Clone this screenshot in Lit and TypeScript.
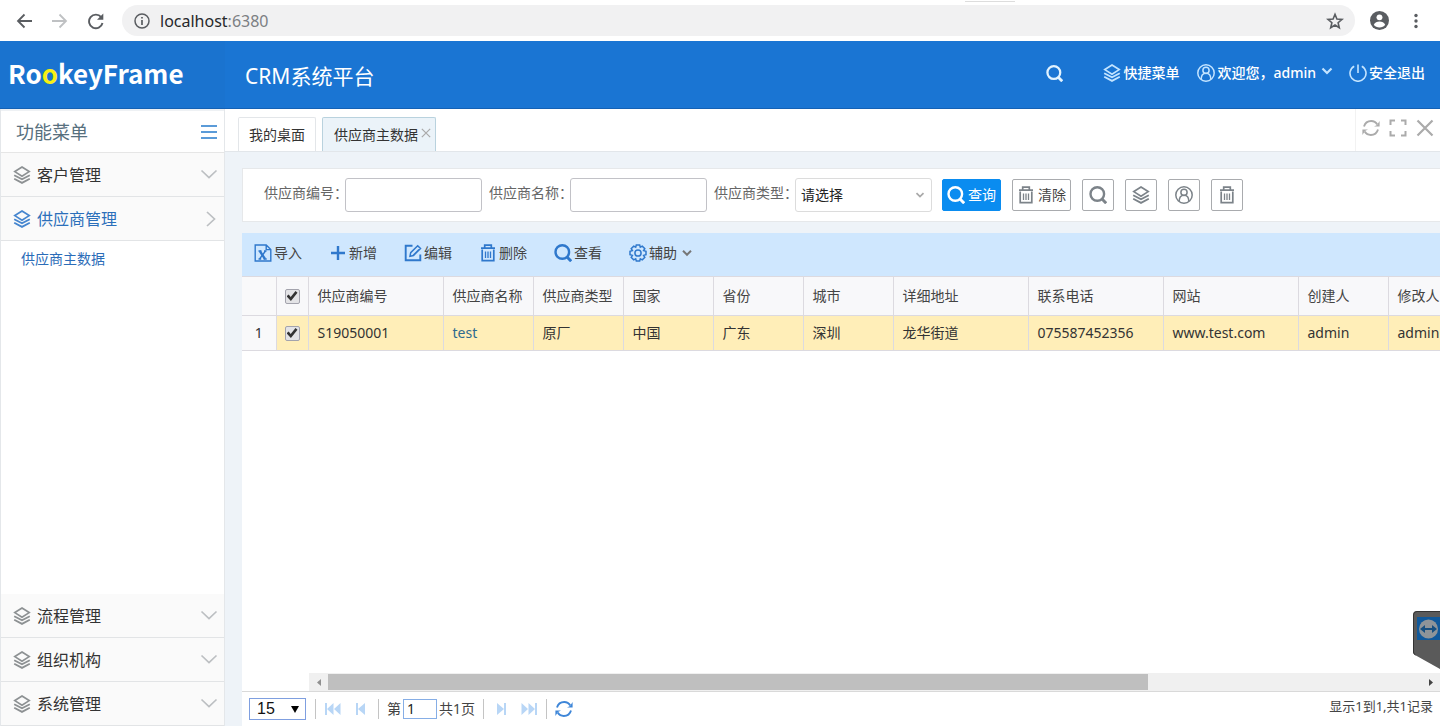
import { LitElement, html, css, svg } from "lit";
import { customElement, property } from "lit/decorators.js";

const shapes: Record<string, unknown> = {
  back: svg`<path d="M17 9H3M9.500 2.500L3 9l6.500 6.500" stroke-width="1.800"/>`,
  forward: svg`<path d="M1 9h14M8.500 2.500L15 9l-6.500 6.500" stroke-width="1.800"/>`,
  reload: svg`<path d="M14.200 5.200A6.800 6.800 0 1 0 15.500 11" stroke-width="1.900"/><path d="M16.300 1.500v6.300H10z" fill="currentColor" stroke="none"/>`,
  info: svg`<circle cx="9" cy="9" r="7" stroke-width="1.500"/><path d="M9 8v5M9 5v1.600" stroke-width="1.700"/>`,
  star: svg`<path d="M9 2.300l1.900 4.700 5.100.4-3.900 3.300 1.200 5L9 13l-4.300 2.700 1.200-5L2 7.400l5.100-.4z" stroke-width="1.600"/>`,
  profile: svg`<circle cx="9" cy="9" r="9" fill="currentColor" stroke="none"/><circle cx="9" cy="6" r="2.800" fill="#fff" stroke="none"/><path d="M3.600 13c1-2.200 3-3 5.400-3s4.400.8 5.400 3c-1.200 1.600-3.200 2.600-5.400 2.600S4.800 14.600 3.600 13z" fill="#fff" stroke="none"/>`,
  dots: svg`<g fill="currentColor" stroke="none"><circle cx="9" cy="3.500" r="1.700"/><circle cx="9" cy="9" r="1.700"/><circle cx="9" cy="14.500" r="1.700"/></g>`,
  layers: svg`<path d="M9 1l7.200 4.600L9 10.200 1.800 5.600z" stroke-width="1.700"/><path d="M1.200 9.200L9 13.300l7.800-4.100M1.200 12.700L9 16.900l7.800-4.200" stroke-width="1.800"/>`,
  search: svg`<circle cx="8.300" cy="8" r="6.800" stroke-width="2.400"/><path d="M13 13l4.200 4.200" stroke-width="3"/>`,
  user: svg`<circle cx="9" cy="9" r="8.200" stroke-width="1.500"/><circle cx="9" cy="6.300" r="3.100" stroke-width="1.500"/><path d="M4.200 15.300c0-3.800 1.700-6 4.800-6s4.800 2.200 4.800 6" stroke-width="1.500"/>`,
  power: svg`<path d="M5.200 2.200a8 8 0 1 0 7.600 0M9 .5v8.500" stroke-width="1.600"/>`,
  down: svg`<path d="M4.500 6.500L9 11l4.500-4.500" stroke-width="2.200"/>`,
  wideDown: svg`<path d="M1.500 4.500L9 11.500l7.500-7" stroke-width="1.700"/>`,
  wideRight: svg`<path d="M7 2l7.500 7L7 16" stroke-width="1.700"/>`,
  menu: svg`<path d="M1 3h16M1 9h16M1 15h16" stroke-width="2"/>`,
  refresh: svg`<path d="M2 7.500C3 4 6 2 9.200 2c2.800 0 4.800 1.300 6.100 3.400M16 10.500C15 14 12 16 8.800 16c-2.800 0-4.800-1.300-6.100-3.400" stroke-width="1.900"/><path d="M17.600 2v5.600H12l3-1.500zM.4 16v-5.600H6l-3 1.500z" fill="currentColor" stroke="none"/>`,
  expand: svg`<path d="M1.500 6V1.500H6M12 1.500h4.500V6M16.500 12v4.500H12M6 16.500H1.500V12" stroke-width="2"/>`,
  close: svg`<path d="M1.500 1.500l15 15M16.500 1.500l-15 15" stroke-width="2.200"/>`,
  excel: svg`<path d="M1.200 1h11l4.600 4.600V17H1.200zM12.200 1v4.600h4.600" stroke-width="1.400"/><path d="M5.800 7l5.200 8" stroke-width="2.300"/><path d="M5.500 15L11.500 7M4.500 7h3M10 7h2.500M4.500 15h2.700M9.700 15h3" stroke-width="1.400"/>`,
  plus: svg`<path d="M2 9h14M9 2v14" stroke-width="2.400"/>`,
  edit: svg`<path d="M8.500 1.700H1.700v14.600h14.600V10.500" stroke-width="1.900"/><path d="M6 12.200l.7-3.500 7-7 2.800 2.800-7 7zM9 11.500l6-6" stroke-width="1.500"/>`,
  trash: svg`<path d="M2 4.200h14M5.700 3.800V1.200h6.600v2.600M3.200 5.500v11.200h11.600V5.500" stroke-width="1.700"/><path d="M6.500 7.500v6.500M9 7.500v6.500M11.500 7.500v6.500" stroke-width="1.300"/>`,
  gear: svg`<path d="M7.300 1h3.400l.6 2.200 2-1.100 2.500 2.500-1.200 2 2.400.7v3.400l-2.400.7 1.200 2-2.500 2.500-2-1.100-.6 2.200H7.300l-.6-2.200-2 1.100-2.500-2.500 1.200-2L1 10.700V7.300l2.400-.7-1.200-2 2.500-2.500 2 1.100z" stroke-width="1.500"/><circle cx="9" cy="9" r="3.100" stroke-width="1.500"/>`,
  first: svg`<path d="M2 3v12" stroke-width="2"/><path d="M9.500 3v12L3 9zM16.500 3v12l-6.500-6z" fill="currentColor" stroke="none"/>`,
  prev: svg`<path d="M5 3v12" stroke-width="2"/><path d="M13 3v12L6 9z" fill="currentColor" stroke="none"/>`,
  next: svg`<path d="M13 3v12" stroke-width="2"/><path d="M5 3v12l7-6z" fill="currentColor" stroke="none"/>`,
  last: svg`<path d="M16 3v12" stroke-width="2"/><path d="M8.500 3v12L15 9zM1.500 3v12L8 9z" fill="currentColor" stroke="none"/>`,
};

@customElement("ui-icon")
class UiIcon extends LitElement {
  @property() name = "";
  static styles = css`
    :host { display: inline-flex; width: 18px; height: 18px; flex: none; }
    svg { width: 100%; height: 100%; fill: none; stroke: currentColor; stroke-width: 1.4; }
  `;
  render() {
    return html`<svg viewBox="0 0 18 18" aria-hidden="true">${shapes[this.name]}</svg>`;
  }
}

const columns = [
  { title: "供应商编号", value: "S19050001", wide: true },
  { title: "供应商名称", value: "test", wide: false, link: true },
  { title: "供应商类型", value: "原厂", wide: false },
  { title: "国家", value: "中国", wide: false },
  { title: "省份", value: "广东", wide: false },
  { title: "城市", value: "深圳", wide: false },
  { title: "详细地址", value: "龙华街道", wide: true },
  { title: "联系电话", value: "075587452356", wide: true },
  { title: "网站", value: "www.test.com", wide: true },
  { title: "创建人", value: "admin", wide: false },
  { title: "修改人", value: "admin", wide: false },
];

const tools = [
  ["excel", "导入"],
  ["plus", "新增"],
  ["edit", "编辑"],
  ["trash", "删除"],
  ["search", "查看"],
  ["gear", "辅助"],
];

@customElement("app-root")
class AppRoot extends LitElement {
  static styles = css`
    :host {
      display: flex; flex-direction: column; height: 100vh; overflow: hidden; position: relative;
      background: #fff; color: #444;
      font: 14px/20px "Noto Sans", "Noto Sans CJK SC", sans-serif;
    }
    * { box-sizing: border-box; }
    button, input, select { font: inherit; color: inherit; margin: 0; }
    button { background: none; border: 0; padding: 0; display: inline-flex; align-items: center; white-space: nowrap; }
    a { color: inherit; text-decoration: none; }

    .browser { flex: none; display: flex; align-items: center; height: 41px; padding: 0 15px; color: #5a5d61; }
    .browser .fwd { color: #bfc1c3; }
    .nav { display: flex; gap: 18px; margin-right: 17px; }
    .address { flex: 1; display: flex; align-items: center; gap: 9px; height: 31px; border-radius: 16px; background: #f1f1f2; padding: 0 11px; }
    .url { flex: 1; font-size: 16px; color: #7c7f83; }
    .url b { font-weight: 400; color: #26282b; }
    .profile { width: 19px; height: 19px; margin: 0 18px 0 15px; }
    .tip { position: absolute; top: 0; left: 67%; width: 50px; height: 2px; border-bottom: 1px solid #ddd; }

    header { flex: none; display: flex; height: 68px; background: #1a75d3; color: #fff; border-bottom: 1px solid #1461b4; }
    .brand { width: 225px; padding: 12px 0 0 8px; background: #1a73cf; font: 700 26px/40px "Noto Sans CJK SC", sans-serif; }
    .brand i { font-style: normal; color: #f7f013; }
    .title { flex: 1; margin: 0; padding: 20px; font-size: 21px; line-height: 30px; font-weight: 400; }
    .links { display: flex; align-items: center; padding: 0 15px 4px 0; font-weight: 500; }
    .links button { gap: 2px; }
    .links ui-icon { color: #c3e4ff; }
    .links .find { margin-right: 40px; padding-top: 2px; }
    .links .find ui-icon { width: 17px; height: 17px; color: #e2f3ff; }
    .links .menu { margin-right: 18px; }
    .links .hello { margin-right: 13px; }
    .links .arrow { margin-top: -4px; }

    main { flex: 1; min-height: 0; display: grid; grid-template-columns: 225px minmax(0, 1fr); background: #eef3f8; }
    aside { display: flex; flex-direction: column; background: #fff; border: 1px solid #e4e7ea; border-width: 0 1px; }
    .head { display: flex; align-items: center; justify-content: space-between; height: 44px; padding: 0 6px 0 15px; border-bottom: 1px solid #e6e6e6; border-top: 2px solid #eef1f4; font-size: 18px; color: #57707e; }
    .head button { color: #5b9bd8; }
    .group { display: flex; align-items: center; width: 100%; height: 44px; padding: 0 6px 0 12px; gap: 6px; background: #fafafa; border-bottom: 1px solid #e2e4e6; font-size: 16px; color: #333; text-align: left; }
    .group span { flex: 1; }
    .group ui-icon { color: #8d9193; }
    .group ui-icon:last-child { color: #bcbfc2; }
    .open { color: #2b6fba; }
    .group.open { color: #2b6fba; }
    .group.open ui-icon:first-child { color: #4686cf; }
    .sub { display: block; padding: 8px 20px; color: #2b6cb8; }
    .fill { flex: 1; }

    .work { display: flex; flex-direction: column; min-width: 0; }
    .tabs { flex: none; display: flex; align-items: flex-end; height: 43px; padding-left: 13px; gap: 6px; background: #fff; border-bottom: 1px solid #e2e6ea; }
    .tab { height: 34px; padding: 0 10px; gap: 3px; border: 1px solid #e3e6e9; border-bottom: 0; border-radius: 2px 2px 0 0; color: #333; }
    .tab.on { padding: 0 4px 0 11px; background: #ebf3f9; border-color: #b9d2de; }
    .tab ui-icon { width: 10px; height: 10px; margin-bottom: 3px; color: #aaa; }
    .actions { display: flex; align-items: center; gap: 9px; height: 100%; margin-left: auto; padding: 0 6px 4px; border-left: 1px solid #f2f2f2; color: #ababab; }

    .body { flex: 1; min-height: 0; display: flex; flex-direction: column; padding: 16px 0 0 17px; }
    form { flex: none; display: flex; align-items: center; height: 54px; padding-left: 21px; background: #fff; border: 1px solid #e6e8ea; border-right: 0; }
    label { width: 81px; white-space: nowrap; color: #666; padding-bottom: 4px; }
    .field { width: 137px; height: 34px; margin-right: 7px; padding: 0 5px; border: 1px solid #c2c2c7; border-radius: 3px; background: #fff; }
    .pick { display: flex; align-items: center; position: relative; margin-right: 3px; }
    .pick select { appearance: none; border-color: #dcdcdc; color: #222; }
    .pick ui-icon { position: absolute; right: 12px; width: 14px; height: 14px; color: #a9a9a9; pointer-events: none; }
    .btn { justify-content: center; gap: 3px; min-width: 32px; height: 32px; margin-right: 11px; padding: 0 4px; border: 1px solid #a9abae; border-radius: 2px; color: #444; }
    .btn ui-icon { color: #7c8389; }
    .btn.primary { background: #0a8cf0; border-color: #0a8cf0; color: #fff; }
    .btn.primary ui-icon { color: #fff; }

    .toolbar { flex: none; display: flex; align-items: center; gap: 27px; height: 43px; margin-top: 11px; padding: 0 12px 3px; background: #cfe7fe; }
    .toolbar button { gap: 2px; }
    .toolbar ui-icon { color: #2f78cc; }
    .toolbar .more { width: 16px; height: 16px; color: #777; }
    .grid { flex: 1; min-height: 0; overflow: hidden; background: #fff; }
    table { border-collapse: collapse; table-layout: fixed; width: 1236px; }
    th, td { border: 1px solid #dcdae0; border-left: 0; padding: 0 9px; text-align: left; white-space: nowrap; font-weight: 400; }
    th { height: 39px; background: #f8f8fa; }
    td { height: 35px; background: #ffeeb8; color: #333; }
    td a { color: #2e6a8e; }
    .num { width: 34px; text-align: center; background: #f9f9fa; }
    .chk { width: 32px; padding: 0; text-align: center; line-height: 0; }
    .wide { width: 135px; }
    .norm { width: 90px; }
    input[type="checkbox"] { appearance: none; display: inline-flex; align-items: center; justify-content: center; width: 15px; height: 15px; border: 1px solid #a3a3ad; border-radius: 2px; background: #e3e3e6; vertical-align: middle; }
    input[type="checkbox"]:checked::after { content: ""; width: 11px; height: 11px; background: #333; clip-path: polygon(0 52%, 20% 36%, 38% 58%, 82% 4%, 100% 20%, 40% 96%); }

    .white { flex: none; background: #fff; }
    .scroll { display: flex; align-items: center; height: 18px; margin-left: 67px; background: #f0f0f0; }
    .scroll svg { width: 19px; height: 9px; fill: #909090; }
    .scroll svg:last-child { fill: #444; }
    .track { flex: 1; }
    .thumb { width: 75%; height: 16px; background: #bfbfbf; }
    .pager { flex: none; display: flex; align-items: center; height: 35px; padding: 0 7px; background: #fff; border-top: 1px solid #d9d9d9; }
    .size { position: relative; display: flex; align-items: center; margin-right: 9px; }
    .size select { appearance: none; width: 57px; height: 22px; padding: 0 7px; border: 1px solid #7f9fe0; background: #fff; color: #111; font: 16px/20px "Liberation Sans", sans-serif; }
    .size svg { position: absolute; right: 7px; width: 8px; height: 8px; pointer-events: none; }
    .bar { width: 1px; height: 20px; background: #c4c4c4; margin-right: 8px; }
    .pages { display: flex; gap: 10px; margin-right: 8px; color: #b8d6f6; }
    .pager label { width: auto; padding: 0 2px 0 0; color: #444; }
    .pager input { width: 34px; height: 20px; margin-right: 2px; padding: 0 3px; border: 1px solid #86aee6; color: #222; }
    .total { margin-right: 8px; }
    .again { color: #3e86d8; }
    .count { margin-left: auto; padding-bottom: 6px; font-size: 13px; }
    .dock { position: absolute; right: 0; bottom: 57px; width: 27px; height: 58px; }
  `;

  private group(text: string, open = false) {
    return html`<button class="group ${open ? "open" : ""}">
      <ui-icon name="layers"></ui-icon><span>${text}</span>
      <ui-icon name=${open ? "wideRight" : "wideDown"}></ui-icon>
    </button>`;
  }

  render() {
    return html`
      <div class="browser">
        <div class="nav">
          <button aria-label="back"><ui-icon name="back"></ui-icon></button>
          <button aria-label="forward" class="fwd"><ui-icon name="forward"></ui-icon></button>
          <button aria-label="reload"><ui-icon name="reload"></ui-icon></button>
        </div>
        <div class="address">
          <ui-icon name="info"></ui-icon>
          <span class="url"><b>localhost</b>:6380</span>
          <button aria-label="bookmark"><ui-icon name="star"></ui-icon></button>
        </div>
        <button aria-label="profile"><ui-icon class="profile" name="profile"></ui-icon></button>
        <button aria-label="more"><ui-icon name="dots"></ui-icon></button>
        <div class="tip"></div>
      </div>
      <header>
        <div class="brand">Ro<i>o</i>keyFrame</div>
        <h1 class="title">CRM系统平台</h1>
        <div class="links">
          <button class="find" aria-label="搜索"><ui-icon name="search"></ui-icon></button>
          <button class="menu"><ui-icon name="layers"></ui-icon>快捷菜单</button>
          <button class="hello"><ui-icon name="user"></ui-icon>欢迎您，admin<ui-icon class="arrow" name="down"></ui-icon></button>
          <button><ui-icon name="power"></ui-icon>安全退出</button>
        </div>
      </header>
      <main>
        <aside>
          <div class="head">功能菜单<button aria-label="折叠"><ui-icon name="menu"></ui-icon></button></div>
          ${this.group("客户管理")} ${this.group("供应商管理", true)}
          <a class="sub" href="#">供应商主数据</a>
          <div class="fill"></div>
          ${this.group("流程管理")} ${this.group("组织机构")} ${this.group("系统管理")}
        </aside>
        <div class="work">
          <div class="tabs">
            <button class="tab">我的桌面</button>
            <button class="tab on">供应商主数据<ui-icon name="close"></ui-icon></button>
            <div class="actions">
              <button aria-label="刷新"><ui-icon name="refresh"></ui-icon></button>
              <button aria-label="全屏"><ui-icon name="expand"></ui-icon></button>
              <button aria-label="关闭"><ui-icon name="close"></ui-icon></button>
            </div>
          </div>
          <div class="body">
            <form>
              <label for="code">供应商编号：</label><input class="field" id="code" />
              <label for="name">供应商名称：</label><input class="field" id="name" />
              <label for="type">供应商类型：</label>
              <div class="pick">
                <select class="field" id="type"><option>请选择</option></select><ui-icon name="down"></ui-icon>
              </div>
              <button type="button" class="btn primary"><ui-icon name="search"></ui-icon>查询</button>
              <button type="button" class="btn"><ui-icon name="trash"></ui-icon>清除</button>
              ${["search", "layers", "user", "trash"].map(
                (n) => html`<button type="button" class="btn" aria-label=${n}><ui-icon name=${n}></ui-icon></button>`
              )}
            </form>
            <div class="toolbar">
              ${tools.map(
                ([icon, text]) => html`<button><ui-icon name=${icon}></ui-icon>${text}${icon === "gear"
                  ? html`<ui-icon class="more" name="down"></ui-icon>`
                  : ""}</button>`
              )}
            </div>
            <div class="grid">
              <table>
                <thead>
                  <tr>
                    <th class="num"></th>
                    <th class="chk"><input type="checkbox" checked aria-label="全选" /></th>
                    ${columns.map((c) => html`<th class=${c.wide ? "wide" : "norm"}>${c.title}</th>`)}
                  </tr>
                </thead>
                <tbody>
                  <tr>
                    <td class="num">1</td>
                    <td class="chk"><input type="checkbox" checked aria-label="选择" /></td>
                    ${columns.map((c) => html`<td>${c.link ? html`<a href="#">${c.value}</a>` : c.value}</td>`)}
                  </tr>
                </tbody>
              </table>
            </div>
            <div class="white">
              <div class="scroll">
                <svg viewBox="0 0 19 9"><path d="M12 1v7L8 4.500z" /></svg>
                <div class="track"><div class="thumb"></div></div>
                <svg viewBox="0 0 19 9"><path d="M8 1v7l4-3.500z" /></svg>
              </div>
            </div>
            <div class="pager">
              <div class="size">
                <select aria-label="每页条数"><option>15</option></select>
                <svg viewBox="0 0 8 8"><path d="M0 1h8L4 8z" /></svg>
              </div>
              <span class="bar"></span>
              <div class="pages">
                <button aria-label="首页"><ui-icon name="first"></ui-icon></button>
                <button aria-label="上一页"><ui-icon name="prev"></ui-icon></button>
              </div>
              <span class="bar"></span>
              <label for="page">第</label><input id="page" value="1" />
              <span class="total">共1页</span>
              <span class="bar"></span>
              <div class="pages">
                <button aria-label="下一页"><ui-icon name="next"></ui-icon></button>
                <button aria-label="末页"><ui-icon name="last"></ui-icon></button>
              </div>
              <span class="bar"></span>
              <button class="again" aria-label="刷新"><ui-icon name="refresh"></ui-icon></button>
              <span class="count">显示1到1,共1记录</span>
            </div>
          </div>
        </div>
      </main>
      <svg class="dock" viewBox="0 0 27 58">
        <path d="M27 0H4Q0 0 0 4v37q0 2 2 3l25 14z" fill="#5a5a5a" />
        <path d="M27 .5H4Q.5.500.5 4v37q0 2 2 3" fill="none" stroke="#333" />
        <path d="M4 6h23v23H4z" fill="#11599b" />
        <circle cx="15.500" cy="18" r="9.500" fill="#8e9499" />
        <path d="M7 18l5-4v3h7v-3l5 4-5 4v-3h-7v3z" fill="#174f80" />
      </svg>
    `;
  }
}
